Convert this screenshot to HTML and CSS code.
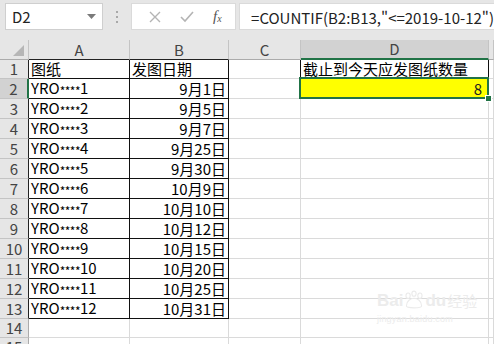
FILE: index.html
```html
<!DOCTYPE html>
<html lang="zh-CN">
<head>
  <meta charset="UTF-8" />
  <meta name="viewport" content="width=device-width, initial-scale=1.0" />
  <title>COUNTIF 截止日期统计</title>
  <link rel="stylesheet" href="styles.css">
</head>
<body>
  <!-- Name box and formula bar -->
  <div class="toolbar">
    <div class="namebox">
      <span>D2</span>
      <svg class="drop" width="9" height="5" viewBox="0 0 9 5"><path d="M0 0 L9 0 L4.5 5 Z" fill="#7a7a7a"/></svg>
    </div>
    <div class="grip"><i></i><i></i><i></i></div>
    <div class="fx-buttons">
      <svg width="12" height="12" viewBox="0 0 12 12"><path d="M1 1 L11 11 M11 1 L1 11" stroke="#b4b4b4" stroke-width="1.4" fill="none"/></svg>
      <svg width="14" height="12" viewBox="0 0 14 12"><path d="M1 6 L5 10 L13 1" stroke="#b4b4b4" stroke-width="1.6" fill="none"/></svg>
      <span class="fx">f<sub>x</sub></span>
    </div>
    <div class="formula">=COUNTIF(B2:B13,"&lt;=2019-10-12")</div>
  </div>

  <!-- Worksheet grid -->
  <table class="sheet">
    <colgroup>
      <col class="c-rh"><col class="c-a"><col class="c-b"><col class="c-c"><col class="c-d"><col>
    </colgroup>
    <thead>
      <tr>
        <th class="corner"><span class="tri"></span></th>
        <th class="edge-b">A</th>
        <th class="edge-b">B</th>
        <th>C</th>
        <th class="sel-col">D</th>
        <th></th>
      </tr>
    </thead>
    <tbody id="rows"></tbody>
  </table>

  <!-- Faint site watermark -->
  <div class="watermark">
    <div class="wm-logo">Bai<svg width="22" height="20" viewBox="0 0 26 22"><g fill="none" stroke="#ebebeb" stroke-width="1.3"><ellipse cx="6" cy="6" rx="2.5" ry="3.2"/><ellipse cx="13" cy="3.5" rx="2.5" ry="3"/><ellipse cx="20" cy="6" rx="2.5" ry="3.2"/><path d="M4 18 C4 12 9 9 13 9 C17 9 22 12 22 18 C22 21 4 21 4 18 Z"/></g></svg>du<span class="wm-cn">经验</span></div>
    <div class="wm-url">jingyan.baidu.com</div>
  </div>

  <script>
    // Drawing list: name and issue date
    const drawings = [
      ['图纸', '发图日期'],
      ['YRO****1', '9月1日'], ['YRO****2', '9月5日'], ['YRO****3', '9月7日'],
      ['YRO****4', '9月25日'], ['YRO****5', '9月30日'], ['YRO****6', '10月9日'],
      ['YRO****7', '10月10日'], ['YRO****8', '10月12日'], ['YRO****9', '10月15日'],
      ['YRO****10', '10月20日'], ['YRO****11', '10月25日'], ['YRO****12', '10月31日']
    ];

    // Masked part of the drawing code is shown with small stars
    function nameCell(text) {
      return text.replace('****', '<span class="mask">****</span>');
    }

    const tbody = document.getElementById('rows');
    for (let i = 0; i < 15; i++) {
      const tr = document.createElement('tr');
      const row = drawings[i];
      const inTable = i < drawings.length;
      let html = `<th class="${i === 1 ? 'sel-row' : ''}${inTable ? ' edge-r' : ''}">${i + 1}</th>`;
      html += `<td class="${inTable ? 'box' : ''}">${row ? nameCell(row[0]) : ''}</td>`;
      html += `<td class="${inTable ? 'box' : ''}${i > 0 ? ' num' : ''}">${row ? row[1] : ''}</td>`;
      html += `<td class="${i === 0 ? 'box-left' : ''}"></td>`;
      if (i === 0) html += `<td class="box">截止到今天应发图纸数量</td>`;
      else if (i === 1) html += `<td class="result num"><div class="selection"><span class="handle"></span></div>8</td>`;
      else html += `<td></td>`;
      html += `<td></td>`;
      tr.innerHTML = html;
      tbody.appendChild(tr);
    }
  </script>
</body>
</html>
```

FILE: styles.css
```css
/* Spreadsheet window */
body {
  margin: 0;
  width: 494px;
  height: 344px;
  overflow: hidden;
  background: #fff;
  font-family: "Noto Sans CJK SC", "Liberation Sans", sans-serif;
  position: relative;
}

.toolbar {
  height: 40px;
  background: #e6e6e6;
  display: flex;
  align-items: flex-start;
  padding: 3px 0 0 5px;
  box-sizing: border-box;
}
.namebox {
  width: 102px;
  height: 27px;
  box-sizing: border-box;
  background: #fff;
  border: 1px solid #cfcfcf;
  display: flex;
  align-items: center;
  justify-content: space-between;
  padding: 0 6px 0 6px;
  font-size: 15px;
  color: #222;
}
.grip {
  width: 30px;
  display: flex;
  flex-direction: column;
  align-items: center;
  gap: 3px;
  padding-top: 8px;
}
.grip i {
  width: 2px;
  height: 2px;
  background: #a8a8a8;
}
.fx-buttons {
  width: 110px;
  height: 27px;
  box-sizing: border-box;
  background: #fff;
  border: 1px solid #dadada;
  display: flex;
  align-items: center;
  justify-content: space-around;
  padding: 0 4px 0 8px;
}
.fx {
  font-family: "Liberation Serif", serif;
  font-style: italic;
  font-size: 15px;
  color: #555;
}
.fx sub {
  font-size: 10px;
  vertical-align: -1px;
}
.formula {
  flex: 1;
  height: 27px;
  box-sizing: border-box;
  margin-left: 3px;
  background: #fff;
  border: 1px solid #dadada;
  border-right: none;
  padding: 3px 0 0 11px;
  font-size: 15px;
  color: #222;
  white-space: nowrap;
}

/* Grid */
.sheet {
  border-collapse: separate;
  border-spacing: 0;
  table-layout: fixed;
  width: 494px;
  font-size: 15px;
}
.c-rh { width: 29px; }
.c-a { width: 101px; }
.c-b { width: 99px; }
.c-c { width: 72px; }
.c-d { width: 188px; }

.sheet th, .sheet td {
  height: 19px;
  padding: 0 2px;
  box-sizing: border-box;
  border-right: 1px solid #dadada;
  border-bottom: 1px solid #dadada;
  white-space: nowrap;
  overflow: visible;
  line-height: 18px;
}
.sheet th {
  background: #e6e6e6;
  font-weight: normal;
  color: #444;
  border-right-color: #c4c4c4;
  border-bottom-color: #c4c4c4;
}
.sheet thead th {
  border-bottom-color: #ababab;
}
.sheet tbody th {
  text-align: center;
  border-right-color: #ababab;
}
.corner {
  position: relative;
}
.tri {
  position: absolute;
  right: 4px;
  bottom: 3px;
  width: 0;
  height: 0;
  border-left: 11px solid transparent;
  border-bottom: 11px solid #b6b6b6;
}
.sheet thead th.edge-b {
  border-bottom-color: #222;
}
.sheet tbody th.edge-r {
  border-right-color: #222;
}
.sheet thead th.sel-col {
  background: #d2d2d2;
  color: #444;
  border-bottom: 2px solid #217346;
}
.sheet tbody th.sel-row {
  background: #d2d2d2;
  border-right: 2px solid #217346;
}

td.box {
  border-right-color: #111;
  border-bottom-color: #111;
  color: #000;
}
td.box-left {
  border-right-color: #111;
}
td.num {
  text-align: right;
}
.mask {
  font-size: 12px;
  position: relative;
  top: 2px;
  letter-spacing: -0.5px;
}
td.result {
  background: #ffff00;
  color: #222;
  position: relative;
  padding-right: 6px;
}
.selection {
  position: absolute;
  left: -2px;
  top: -2px;
  right: -1px;
  bottom: -1px;
  border: 2px solid #217346;
}
.handle {
  position: absolute;
  right: -5px;
  bottom: -5px;
  width: 5px;
  height: 5px;
  background: #217346;
  border: 1px solid #fff;
}

/* Watermark */
.watermark {
  position: absolute;
  left: 377px;
  top: 290px;
  color: #ececec;
  font-family: "Liberation Sans", sans-serif;
}
.wm-logo {
  display: flex;
  align-items: flex-end;
  font-size: 17px;
  font-weight: bold;
  line-height: 18px;
}
.wm-cn {
  font-family: "Noto Sans CJK SC", sans-serif;
  font-size: 15px;
  font-weight: normal;
  margin-left: 1px;
}
.wm-url {
  font-size: 9px;
  margin-top: 4px;
  letter-spacing: 0.2px;
}
```
